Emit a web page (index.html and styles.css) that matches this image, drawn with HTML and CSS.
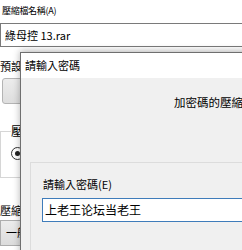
FILE: index.html
```html
<!DOCTYPE html>
<html lang="zh-Hant">
<head>
<meta charset="utf-8">
<title>請輸入密碼</title>
<link rel="stylesheet" href="styles.css">
</head>
<body>
<div class="main">
  <div class="lbl-top">壓縮檔名稱(A)</div>
  <div class="namebox">綠母控 13.rar</div>
  <div class="lbl-profile">預設設定檔</div>
  <div class="btn-profile">設定檔...</div>
  <fieldset class="group">
    <legend class="group-title">壓縮檔格式</legend>
    <span class="radio"><span class="radio-dot"></span></span>
  </fieldset>
  <div class="lbl-method">壓縮方式(C)</div>
  <div class="combo">一般</div>
</div>

<div class="dialog">
  <div class="dlg-title">請輸入密碼</div>
  <div class="dlg-body">
    <div class="dlg-msg">加密碼的壓縮檔案</div>
    <div class="frame">
      <div class="pw-label">請輸入密碼(E)</div>
      <div class="pw-input">上老王论坛当老王</div>
    </div>
  </div>
</div>
</body>
</html>
```

FILE: styles.css
```css
html, body {
  margin: 0;
  padding: 0;
}
body {
  width: 242px;
  height: 250px;
  overflow: hidden;
  position: relative;
  background: #ffffff;
  font-family: "Noto Sans CJK TC", "Noto Sans", sans-serif;
  color: #000;
  white-space: nowrap;
}

.main {
  display: flex;
  flex-direction: column;
}

.lbl-top {
  font-size: 9px;
  line-height: 12px;
  height: 12px;
  padding: 5px 0 6px 2px;
  letter-spacing: -0.3px;
}

.namebox {
  height: 22px;
  border: 1px solid #7a7a7a;
  border-right: none;
  font-size: 11px;
  line-height: 22px;
  padding-left: 4px;
}

.lbl-profile {
  font-size: 11px;
  line-height: 12px;
  height: 12px;
  padding-top: 13px;
  padding-bottom: 6px;
}

.btn-profile {
  margin-left: 2px;
  height: 24px;
  border: 1px solid #b4b4b4;
  border-radius: 3px 0 0 3px;
  background: linear-gradient(#ececec, #dedede);
  font-size: 11px;
  line-height: 24px;
  padding-left: 6px;
  color: transparent;
}

.group {
  margin: 20px 0 0 0;
  padding: 0 0 17px 10px;
  border: 1px solid #d6d6d6;
  border-right: none;
  min-inline-size: 0;
}
.group-title {
  padding: 0 1px 0 0;
  font-size: 12px;
  line-height: 14px;
}

.radio {
  display: block;
  margin-top: 9px;
  width: 11px;
  height: 11px;
  border: 1px solid #333;
  border-radius: 50%;
  position: relative;
  background: #fff;
}
.radio-dot {
  position: absolute;
  left: 3px;
  top: 3px;
  width: 5px;
  height: 5px;
  border-radius: 50%;
  background: #222;
}

.lbl-method {
  font-size: 11px;
  line-height: 12px;
  height: 12px;
  padding-top: 26px;
  padding-bottom: 4px;
}

.combo {
  height: 24px;
  border: 1px solid #adadad;
  border-right: none;
  background: linear-gradient(#ececec, #dcdcdc);
  font-size: 11px;
  line-height: 22px;
  padding-left: 5px;
}

/* Overlaying dialog window */
.dialog {
  position: absolute;
  left: 20px;
  top: 52px;
  width: 280px;
  height: 220px;
  border: 1px solid #6f6f6f;
  background: #f0f0f0;
  box-shadow: 0 -1px 7px rgba(0, 0, 0, 0.3);
}

.dlg-title {
  height: 25px;
  background: #ffffff;
  font-size: 11px;
  line-height: 25px;
  padding-left: 4px;
}

.dlg-body {
  display: flex;
  flex-direction: column;
}

.dlg-msg {
  font-size: 11.5px;
  line-height: 12px;
  padding: 18px 0 0 153px;
  height: 12px;
}

.frame {
  margin: 54px 0 0 9px;
  border: 1px solid #dcdcdc;
  border-right: none;
  height: 120px;
  display: flex;
  flex-direction: column;
}

.pw-label {
  font-size: 11px;
  line-height: 12px;
  height: 12px;
  padding: 15px 0 0 12px;
}

.pw-input {
  margin: 8px 0 0 11px;
  height: 22px;
  border: 1px solid #3f7cba;
  border-right: none;
  background: #ffffff;
  font-size: 12px;
  line-height: 22px;
  padding-left: 2px;
}
```
